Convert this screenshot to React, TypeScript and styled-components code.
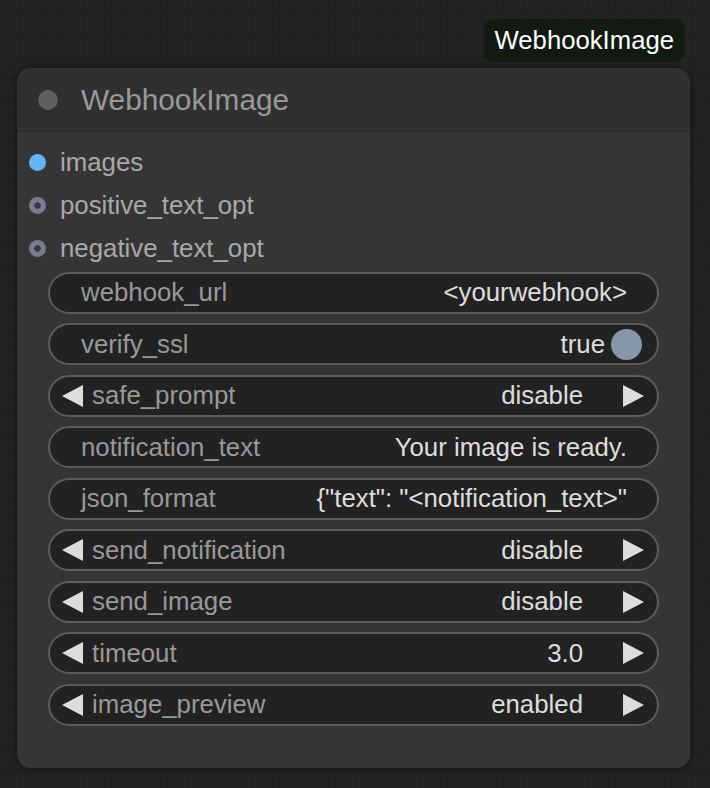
import React from "react";
import styled, { createGlobalStyle } from "styled-components";

const GlobalStyle = createGlobalStyle`
  html, body {
    margin: 0;
    padding: 0;
    background: #222222;
  }
  * {
    box-sizing: border-box;
  }
`;

const Canvas = styled.div`
  width: 710px;
  height: 788px;
  overflow: hidden;
  display: flex;
  flex-direction: column;
  padding: 19px 25px 0 17px;
  background-color: #232323;
  background-image: linear-gradient(to right, #1e1e1e 1px, transparent 1px),
    linear-gradient(to bottom, #1e1e1e 1px, transparent 1px);
  background-size: 21px 21px;
  background-position: 20px 14px;
  font-family: "Liberation Sans", Arial, sans-serif;
`;

const Badge = styled.div`
  align-self: flex-end;
  height: 43px;
  display: flex;
  align-items: center;
  padding: 0 11px;
  border-radius: 10px;
  background: #121a12;
  color: #ffffff;
  font-size: 25.7px;
`;

const Node = styled.div`
  margin-top: 6px;
  width: 673px;
  height: 700px;
  border-radius: 14px;
  background: #353535;
  box-shadow: 0 0 6px rgba(0, 0, 0, 0.55);
  overflow: hidden;
`;

const TitleBar = styled.div`
  height: 64px;
  display: flex;
  align-items: center;
  padding-left: 21px;
  gap: 23px;
  background: #303030;
  border-bottom: 1px solid #282828;
`;

const StatusDot = styled.span`
  width: 20px;
  height: 20px;
  border-radius: 50%;
  background: #5f5f5f;
`;

const Title = styled.span`
  color: #999999;
  font-size: 29.8px;
`;

const Slots = styled.div`
  padding: 9px 0 1.5px 0;
`;

const SlotRow = styled.div`
  height: 43px;
  display: flex;
  align-items: center;
  padding-left: 12px;
  gap: 14px;
  color: #a9a9a9;
  font-size: 25.8px;
`;

const SlotDot = styled.span<{ $linked?: boolean }>`
  width: 17px;
  height: 17px;
  border-radius: 50%;
  background: ${(p) =>
    p.$linked
      ? "#64b5f6"
      : "radial-gradient(circle, #3a3a44 0 3px, #7a7a90 3.5px)"};
`;

const Widgets = styled.div`
  display: flex;
  flex-direction: column;
  gap: 9.5px;
  padding: 0 31px;
`;

const Widget = styled.div<{ $combo?: boolean }>`
  height: 42px;
  display: flex;
  align-items: center;
  border: 2px solid #5c5c5c;
  border-radius: 21px;
  background: #222222;
  font-size: 25.8px;
  padding: ${(p) => (p.$combo ? "0 13px 0 12px" : "0 30px 0 31px")};
`;

const Label = styled.span<{ $combo?: boolean }>`
  flex: 1;
  color: #999999;
  margin-left: ${(p) => (p.$combo ? "9px" : "0")};
  white-space: nowrap;
`;

const Value = styled.span<{ $combo?: boolean }>`
  color: #dddddd;
  white-space: nowrap;
  margin-right: ${(p) => (p.$combo ? "40px" : "0")};
`;

const Knob = styled.span`
  width: 31px;
  height: 31px;
  border-radius: 50%;
  background: #8796a8;
  margin-left: 6px;
  margin-right: -15px;
`;

const Arrow = ({ dir }: { dir: "left" | "right" }) => (
  <svg width="21" height="22" viewBox="0 0 21 22" style={{ flexShrink: 0 }}>
    <polygon
      points={dir === "left" ? "21,0 21,22 0,11" : "0,0 0,22 21,11"}
      fill="#dddddd"
    />
  </svg>
);

type Item =
  | { kind: "text"; label: string; value: string }
  | { kind: "toggle"; label: string; value: string }
  | { kind: "combo"; label: string; value: string };

const items: Item[] = [
  { kind: "text", label: "webhook_url", value: "<yourwebhook>" },
  { kind: "toggle", label: "verify_ssl", value: "true" },
  { kind: "combo", label: "safe_prompt", value: "disable" },
  { kind: "text", label: "notification_text", value: "Your image is ready." },
  { kind: "text", label: "json_format", value: '{"text": "<notification_text>"' },
  { kind: "combo", label: "send_notification", value: "disable" },
  { kind: "combo", label: "send_image", value: "disable" },
  { kind: "combo", label: "timeout", value: "3.0" },
  { kind: "combo", label: "image_preview", value: "enabled" },
];

const slots = [
  { name: "images", linked: true },
  { name: "positive_text_opt", linked: false },
  { name: "negative_text_opt", linked: false },
];

function App() {
  return (
    <>
      <GlobalStyle />
      <Canvas>
        <Badge>WebhookImage</Badge>
        <Node>
          <TitleBar>
            <StatusDot />
            <Title>WebhookImage</Title>
          </TitleBar>
          <Slots>
            {slots.map((s) => (
              <SlotRow key={s.name}>
                <SlotDot $linked={s.linked} />
                {s.name}
              </SlotRow>
            ))}
          </Slots>
          <Widgets>
            {items.map((it) =>
              it.kind === "combo" ? (
                <Widget key={it.label} $combo>
                  <Arrow dir="left" />
                  <Label $combo>{it.label}</Label>
                  <Value $combo>{it.value}</Value>
                  <Arrow dir="right" />
                </Widget>
              ) : (
                <Widget key={it.label}>
                  <Label>{it.label}</Label>
                  <Value>{it.value}</Value>
                  {it.kind === "toggle" && <Knob />}
                </Widget>
              )
            )}
          </Widgets>
        </Node>
      </Canvas>
    </>
  );
}

export default App;
